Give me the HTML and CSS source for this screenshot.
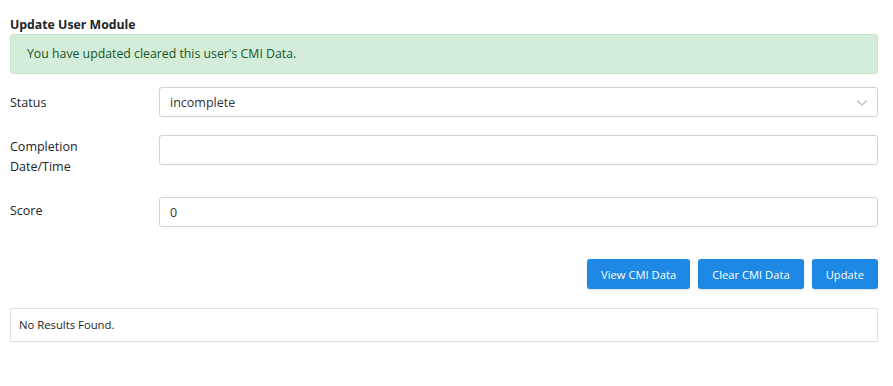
FILE: index.html
```html
<!DOCTYPE html>
<html lang="en">

<head>
    <meta charset="UTF-8">
    <link rel="stylesheet" href="styles.css">
</head>

<body>
    <div class="module-page">
        <h1 class="page-title">Update User Module</h1>

        <div class="alert-success">You have updated cleared this user's CMI Data.</div>

        <form class="module-form">
            <div class="form-row">
                <label class="form-label status-label">Status</label>
                <div class="select-wrap">
                    <select class="form-control">
                        <option>incomplete</option>
                        <option>complete</option>
                    </select>
                    <svg class="chevron" width="12" height="8" viewBox="0 0 12 8">
                        <path d="M1 1.5 L6 6 L11 1.5" fill="none" stroke="#b8bcc4" stroke-width="1.2" />
                    </svg>
                </div>
            </div>

            <div class="form-row">
                <label class="form-label">Completion<br>Date/Time</label>
                <input class="form-control" type="text" value="">
            </div>

            <div class="form-row">
                <label class="form-label">Score</label>
                <input class="form-control" type="text" value="0">
            </div>

            <div class="button-row">
                <button type="button" class="btn-primary">View CMI Data</button>
                <button type="button" class="btn-primary">Clear CMI Data</button>
                <button type="button" class="btn-primary">Update</button>
            </div>
        </form>

        <div class="results-box">No Results Found.</div>
    </div>
</body>

</html>
```

FILE: styles.css
```css
body {
    font-family: "Open Sans", "Noto Sans", Arial, sans-serif;
    margin: 0;
    padding: 0 15px 0 10px;
    color: #212529;
    background-color: #fff;
    font-size: 12.5px;
}

.page-title {
    font-size: 12.3px;
    font-weight: 700;
    margin: 0;
    padding-top: 15px;
    line-height: 19px;
}

.alert-success {
    background-color: #d4edda;
    border: 1px solid #c3e6cb;
    color: #155724;
    border-radius: 3px;
    padding: 0 16px;
    height: 38px;
    line-height: 38px;
    font-size: 12.3px;
}

.module-form {
    margin-top: 13px;
}

.form-row {
    display: flex;
    align-items: flex-start;
    margin-bottom: 18px;
}

.form-row:nth-child(2) {
    margin-bottom: 20px;
}

.form-label {
    width: 149px;
    flex-shrink: 0;
    line-height: 20px;
    padding-top: 4px;
}

.status-label {
    padding-top: 6px;
}

.form-row:nth-child(2) .form-label {
    padding-top: 2px;
}

.form-control {
    flex: 1;
    height: 30px;
    box-sizing: border-box;
    border: 1px solid #ced4da;
    border-radius: 3px;
    padding: 0 10px;
    font-family: inherit;
    font-size: 12.5px;
    color: #333;
    background: #fff;
    appearance: none;
    -webkit-appearance: none;
    outline: none;
}

.select-wrap {
    flex: 1;
    display: flex;
    position: relative;
}

.select-wrap .form-control {
    width: 100%;
}

.chevron {
    position: absolute;
    right: 10px;
    top: 12px;
    pointer-events: none;
}

.button-row {
    display: flex;
    justify-content: flex-end;
    gap: 8px;
    margin-top: 32px;
}

.btn-primary {
    background-color: #1e88e5;
    color: #fff;
    border: none;
    border-radius: 3px;
    height: 30px;
    padding: 0 14px;
    font-family: inherit;
    font-size: 11.2px;
    cursor: pointer;
    box-shadow: 0 1px 2px rgba(0, 0, 0, 0.15);
}

.btn-primary:hover {
    background-color: #1976d2;
}

.results-box {
    margin-top: 19px;
    border: 1px solid #dee2e6;
    height: 34px;
    box-sizing: border-box;
    line-height: 32px;
    padding: 0 8px;
    font-size: 11.3px;
}
```
